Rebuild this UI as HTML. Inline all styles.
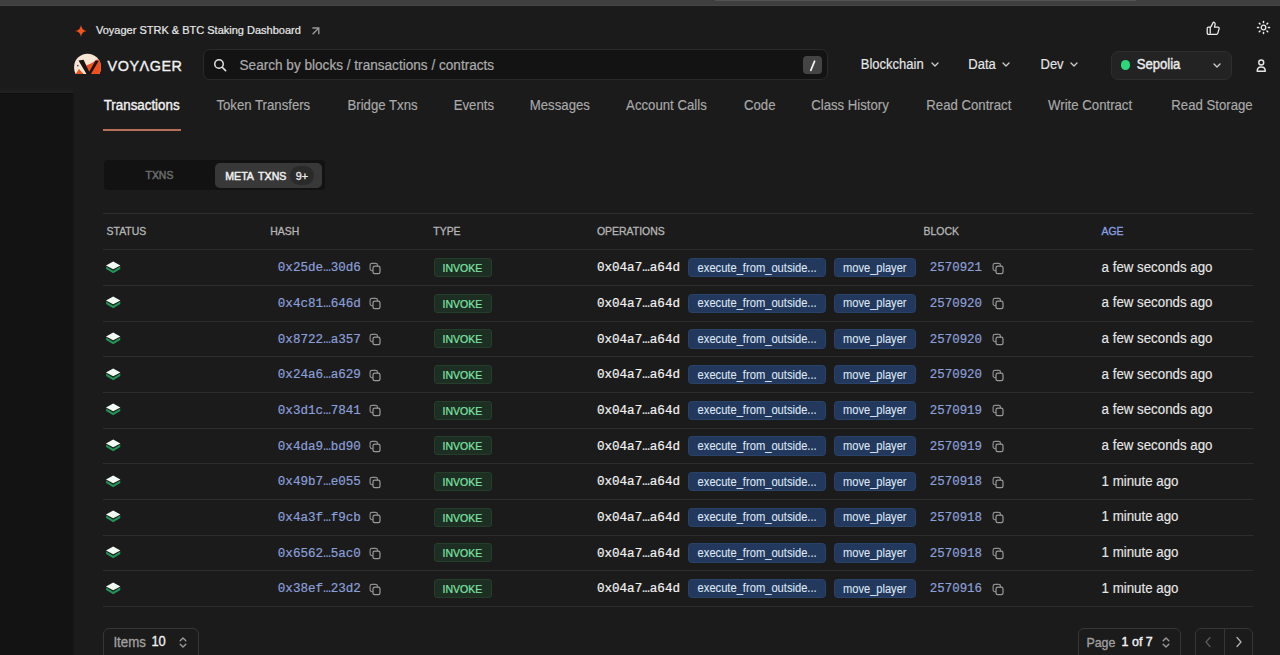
<!DOCTYPE html>
<html><head><meta charset="utf-8">
<style>
html,body{margin:0;padding:0;}
body{width:1280px;height:655px;overflow:hidden;background:#1b1b1b;position:relative;font-family:"Liberation Sans", sans-serif;}
.t{position:absolute;white-space:pre;}
.S{font-family:"Liberation Sans", sans-serif;}
.M{font-family:"Liberation Mono", monospace;}
.a{position:absolute;}
</style></head><body>
<div class="a" style="left:0;top:0;width:1280px;height:6px;background:#3f3f3f;border-bottom:1px solid #454545;box-sizing:border-box"></div>
<div class="a" style="left:715px;top:0;width:421px;height:1px;background:#535353"></div>
<div class="a" style="left:0;top:87.5px;width:73px;height:5px;background:linear-gradient(#1c1c1c,#202020)"></div>
<div class="a" style="left:0;top:92.5px;width:72.5px;height:563px;background:#131313;border-top:1px solid #0f0f0f;box-sizing:border-box"></div>
<div class="a" style="left:72.5px;top:92.5px;width:2.5px;height:563px;background:linear-gradient(90deg,#151515,#1b1b1b)"></div>
<svg class="a" style="left:75px;top:25px" width="12" height="12" viewBox="0 0 12 12"><path d="M6 0 Q6.6 5.4 12 6 Q6.6 6.6 6 12 Q5.4 6.6 0 6 Q5.4 5.4 6 0Z" fill="#f2561d"/></svg>
<div class="t S" style="left:96px;top:25.39px;font-size:11px;line-height:11px;color:#e8e8e8;font-weight:400;-webkit-text-stroke:0.2px #e8e8e8;transform:scaleY(1.07);transform-origin:0 9.31px;">Voyager STRK &amp; BTC Staking Dashboard</div>
<svg class="a" style="left:311px;top:27px" width="9" height="9" viewBox="0 0 9 9"><path d="M1.6 7.2 L7.6 1.2 M1.4 1 H7.8 V7.2" stroke="#9a9a9a" stroke-width="1.35" fill="none"/></svg>
<svg class="a" style="left:74px;top:53px" width="28" height="22" viewBox="0 0 28 22">
<defs><clipPath id="lc"><path d="M0.1 14.1 A13.4 13.4 0 0 1 26.9 14.1 L26.9 15 A13.4 13.4 0 0 1 25.4 21 L1.6 21 A13.4 13.4 0 0 1 0.1 15 Z"/></clipPath></defs>
<g clip-path="url(#lc)">
<rect x="0" y="0" width="28" height="22" fill="#f7e6d4"/>
<path d="M12.3 12.5 L18 10 L22.5 6.8 L28 6 L28 22 L15 22 Z" fill="#f0501e"/>
<path d="M1 22 L5 16 L10.5 22 Z" fill="#f0501e"/>
<path d="M4.5 7.6 L9.6 6.8 L15.2 18.8 L21.6 7.6 L24.6 8 L16.8 21.2 L12.6 21.2 Z" fill="#1a1412"/>
<circle cx="3.8" cy="12.6" r="0.9" fill="#555"/>
</g></svg>
<div class="t S" style="left:107.5px;top:59.21px;font-size:14.4px;line-height:14.4px;color:#f2f2f2;font-weight:400;-webkit-text-stroke:0.35px #f2f2f2;transform:scaleY(1.07);transform-origin:0 12.19px;letter-spacing:0.55px;">VOY&#923;GER</div>
<div class="a" style="left:203px;top:49px;width:625px;height:31px;box-sizing:border-box;background:#131313;border:1px solid #2a2a2a;border-radius:7px"></div>
<svg class="a" style="left:213px;top:58px" width="15" height="15" viewBox="0 0 15 15"><circle cx="6" cy="6" r="4.25" stroke="#e2e2e2" stroke-width="1.5" fill="none"/><path d="M9.2 9.2 L12.6 12.6" stroke="#e2e2e2" stroke-width="1.6" stroke-linecap="round"/></svg>
<div class="t S" style="left:239.5px;top:58.79px;font-size:13.6px;line-height:13.6px;color:#ababab;font-weight:400;-webkit-text-stroke:0.2px #ababab;transform:scaleY(1.07);transform-origin:0 11.51px;">Search by blocks / transactions / contracts</div>
<div class="a" style="left:803px;top:56.2px;width:18.5px;height:18px;background:#444444;border-radius:4px"></div>
<svg class="a" style="left:803px;top:56px" width="19" height="19" viewBox="0 0 19 19"><path d="M11.6 5.2 L7.8 14.3" stroke="#f4f4f4" stroke-width="1.7" stroke-linecap="round"/></svg>
<div class="t S" style="left:860.8px;top:57.50px;font-size:13px;line-height:13px;color:#e6e6e6;font-weight:400;-webkit-text-stroke:0.15px #e6e6e6;transform:scaleY(1.07);transform-origin:0 11.00px;">Blockchain</div>
<svg class="a" style="left:930.5px;top:62px" width="8" height="5" viewBox="0 0 8 5"><path d="M1 1 L4 4 L7 1" stroke="#cfcfcf" stroke-width="1.3" fill="none" stroke-linecap="round" stroke-linejoin="round"/></svg>
<div class="t S" style="left:968.3px;top:57.50px;font-size:13px;line-height:13px;color:#e6e6e6;font-weight:400;-webkit-text-stroke:0.15px #e6e6e6;transform:scaleY(1.07);transform-origin:0 11.00px;">Data</div>
<svg class="a" style="left:1002.3px;top:62px" width="8" height="5" viewBox="0 0 8 5"><path d="M1 1 L4 4 L7 1" stroke="#cfcfcf" stroke-width="1.3" fill="none" stroke-linecap="round" stroke-linejoin="round"/></svg>
<div class="t S" style="left:1040.5px;top:57.50px;font-size:13px;line-height:13px;color:#e6e6e6;font-weight:400;-webkit-text-stroke:0.15px #e6e6e6;transform:scaleY(1.07);transform-origin:0 11.00px;">Dev</div>
<svg class="a" style="left:1069.8px;top:62px" width="8" height="5" viewBox="0 0 8 5"><path d="M1 1 L4 4 L7 1" stroke="#cfcfcf" stroke-width="1.3" fill="none" stroke-linecap="round" stroke-linejoin="round"/></svg>
<div class="a" style="left:1111px;top:51px;width:120.5px;height:28.5px;box-sizing:border-box;background:#232323;border:1px solid #2e2e2e;border-radius:7px"></div>
<div class="a" style="left:1120.8px;top:60px;width:9.5px;height:9.5px;border-radius:50%;background:#2bd87a"></div>
<div class="t S" style="left:1136.7px;top:57.91px;font-size:13.1px;line-height:13.1px;color:#ececec;font-weight:400;-webkit-text-stroke:0.38px #ececec;transform:scaleY(1.07);transform-origin:0 11.09px;">Sepolia</div>
<svg class="a" style="left:1212.5px;top:63px" width="8" height="5" viewBox="0 0 8 5"><path d="M1 1 L4 4 L7 1" stroke="#cfcfcf" stroke-width="1.3" fill="none" stroke-linecap="round" stroke-linejoin="round"/></svg>
<svg class="a" style="left:1255px;top:59px" width="12" height="14" viewBox="0 0 12 14"><circle cx="6.25" cy="3.5" r="2.45" stroke="#e6e6e6" stroke-width="1.45" fill="none"/><path d="M2.2 12.2 C2.2 9.2 3.9 8 6.25 8 C8.6 8 10.3 9.2 10.3 12.2 Z" stroke="#e6e6e6" stroke-width="1.45" fill="none" stroke-linejoin="round"/></svg>
<svg class="a" style="left:1206.3px;top:20.5px" width="14.5" height="14.5" viewBox="0 0 24 24"><path d="M7 10v11" stroke="#ececec" stroke-width="2.1" fill="none"/><path d="M15 5.88 14 10h5.83a2 2 0 0 1 1.92 2.56l-2.33 8A2 2 0 0 1 17.5 22H4a2 2 0 0 1-2-2v-8a2 2 0 0 1 2-2h2.76a2 2 0 0 0 1.79-1.11L12 2a3.13 3.13 0 0 1 3 3.88Z" stroke="#ececec" stroke-width="2.1" fill="none" stroke-linejoin="round"/></svg>
<svg class="a" style="left:1256px;top:20.3px" width="15" height="15" viewBox="0 0 15 15"><circle cx="7.5" cy="7.5" r="2.3" stroke="#ececec" stroke-width="1.3" fill="none"/><path d="M12.40 7.50 L13.50 7.50" stroke="#ececec" stroke-width="1.5" stroke-linecap="round"/><path d="M10.96 10.96 L11.74 11.74" stroke="#ececec" stroke-width="1.5" stroke-linecap="round"/><path d="M7.50 12.40 L7.50 13.50" stroke="#ececec" stroke-width="1.5" stroke-linecap="round"/><path d="M4.04 10.96 L3.26 11.74" stroke="#ececec" stroke-width="1.5" stroke-linecap="round"/><path d="M2.60 7.50 L1.50 7.50" stroke="#ececec" stroke-width="1.5" stroke-linecap="round"/><path d="M4.04 4.04 L3.26 3.26" stroke="#ececec" stroke-width="1.5" stroke-linecap="round"/><path d="M7.50 2.60 L7.50 1.50" stroke="#ececec" stroke-width="1.5" stroke-linecap="round"/><path d="M10.96 4.04 L11.74 3.26" stroke="#ececec" stroke-width="1.5" stroke-linecap="round"/></svg>
<div class="t S" style="left:103.7px;top:99.10px;font-size:13.35px;line-height:13.35px;color:#f2f2f2;font-weight:400;-webkit-text-stroke:0.35px #f2f2f2;transform:scaleY(1.07);transform-origin:0 11.30px;">Transactions</div>
<div class="t S" style="left:216.4px;top:99.23px;font-size:13.2px;line-height:13.2px;color:#a9a9a9;font-weight:400;-webkit-text-stroke:0.15px #a9a9a9;transform:scaleY(1.07);transform-origin:0 11.17px;">Token Transfers</div>
<div class="t S" style="left:347.5px;top:99.23px;font-size:13.2px;line-height:13.2px;color:#a9a9a9;font-weight:400;-webkit-text-stroke:0.15px #a9a9a9;transform:scaleY(1.07);transform-origin:0 11.17px;">Bridge Txns</div>
<div class="t S" style="left:453.7px;top:99.23px;font-size:13.2px;line-height:13.2px;color:#a9a9a9;font-weight:400;-webkit-text-stroke:0.15px #a9a9a9;transform:scaleY(1.07);transform-origin:0 11.17px;">Events</div>
<div class="t S" style="left:529.8px;top:99.23px;font-size:13.2px;line-height:13.2px;color:#a9a9a9;font-weight:400;-webkit-text-stroke:0.15px #a9a9a9;transform:scaleY(1.07);transform-origin:0 11.17px;">Messages</div>
<div class="t S" style="left:626.1px;top:99.23px;font-size:13.2px;line-height:13.2px;color:#a9a9a9;font-weight:400;-webkit-text-stroke:0.15px #a9a9a9;transform:scaleY(1.07);transform-origin:0 11.17px;">Account Calls</div>
<div class="t S" style="left:744px;top:99.23px;font-size:13.2px;line-height:13.2px;color:#a9a9a9;font-weight:400;-webkit-text-stroke:0.15px #a9a9a9;transform:scaleY(1.07);transform-origin:0 11.17px;">Code</div>
<div class="t S" style="left:811.2px;top:99.23px;font-size:13.2px;line-height:13.2px;color:#a9a9a9;font-weight:400;-webkit-text-stroke:0.15px #a9a9a9;transform:scaleY(1.07);transform-origin:0 11.17px;">Class History</div>
<div class="t S" style="left:926.3px;top:99.23px;font-size:13.2px;line-height:13.2px;color:#a9a9a9;font-weight:400;-webkit-text-stroke:0.15px #a9a9a9;transform:scaleY(1.07);transform-origin:0 11.17px;">Read Contract</div>
<div class="t S" style="left:1048.1px;top:99.23px;font-size:13.2px;line-height:13.2px;color:#a9a9a9;font-weight:400;-webkit-text-stroke:0.15px #a9a9a9;transform:scaleY(1.07);transform-origin:0 11.17px;">Write Contract</div>
<div class="t S" style="left:1171.3px;top:99.23px;font-size:13.2px;line-height:13.2px;color:#a9a9a9;font-weight:400;-webkit-text-stroke:0.15px #a9a9a9;transform:scaleY(1.07);transform-origin:0 11.17px;">Read Storage</div>
<div class="a" style="left:103px;top:128.5px;width:77.5px;height:2px;background:#b47157"></div>
<div class="a" style="left:104px;top:160.3px;width:220.7px;height:30px;background:#121212;border-radius:4px"></div>
<div class="a" style="left:214.6px;top:163.1px;width:107.7px;height:24.8px;background:#383838;border-radius:5px"></div>
<div class="t S" style="left:145.6px;top:171.20px;font-size:10.4px;line-height:10.4px;color:#6c6c6c;font-weight:400;-webkit-text-stroke:0.45px #6c6c6c;transform:scaleY(1.07);transform-origin:0 8.80px;">TXNS</div>
<div class="t S" style="left:225.3px;top:171.03px;font-size:10.6px;line-height:10.6px;color:#f0f0f0;font-weight:400;-webkit-text-stroke:0.45px #f0f0f0;transform:scaleY(1.07);transform-origin:0 8.97px;word-spacing:2px;">META TXNS</div>
<div class="a" style="left:290px;top:166px;width:23.5px;height:19px;background:#2a2a2a;border-radius:10px"></div>
<div class="t S" style="left:295.8px;top:170.86px;font-size:10.8px;line-height:10.8px;color:#ececec;font-weight:400;-webkit-text-stroke:0.3px #ececec;transform:scaleY(1.07);transform-origin:0 9.14px;">9+</div>
<div class="a" style="left:103px;top:213px;width:1150px;height:1px;background:#2d2d2d"></div>
<div class="t S" style="left:106.6px;top:226.55px;font-size:10.45px;line-height:10.45px;color:#b5b5b5;font-weight:400;-webkit-text-stroke:0.3px #b5b5b5;transform:scaleY(1.07);transform-origin:0 8.85px;">STATUS</div>
<div class="t S" style="left:270.3px;top:226.55px;font-size:10.45px;line-height:10.45px;color:#b5b5b5;font-weight:400;-webkit-text-stroke:0.3px #b5b5b5;transform:scaleY(1.07);transform-origin:0 8.85px;">HASH</div>
<div class="t S" style="left:433.3px;top:226.55px;font-size:10.45px;line-height:10.45px;color:#b5b5b5;font-weight:400;-webkit-text-stroke:0.3px #b5b5b5;transform:scaleY(1.07);transform-origin:0 8.85px;">TYPE</div>
<div class="t S" style="left:597px;top:226.55px;font-size:10.45px;line-height:10.45px;color:#b5b5b5;font-weight:400;-webkit-text-stroke:0.3px #b5b5b5;transform:scaleY(1.07);transform-origin:0 8.85px;">OPERATIONS</div>
<div class="t S" style="left:923.5px;top:226.55px;font-size:10.45px;line-height:10.45px;color:#b5b5b5;font-weight:400;-webkit-text-stroke:0.3px #b5b5b5;transform:scaleY(1.07);transform-origin:0 8.85px;">BLOCK</div>
<div class="t S" style="left:1101.5px;top:226.55px;font-size:10.45px;line-height:10.45px;color:#8aa0e0;font-weight:400;-webkit-text-stroke:0.3px #8aa0e0;transform:scaleY(1.07);transform-origin:0 8.85px;">AGE</div>
<div class="a" style="left:103px;top:249.40px;width:1150px;height:1px;background:#2d2d2d"></div>
<svg class="a" style="left:105.7px;top:260.7px" width="15" height="13" viewBox="0 0 15 13"><path d="M0.1 5.6 L7.2 9.7 L14.3 5.6 L14.3 8.1 L7.2 12.3 L0.1 8.1 Z" fill="#239356"/><path d="M7.2 0.6 L14.4 4.4 L7.2 8.3 L0 4.4 Z" fill="#f2faf4"/></svg>
<div class="t M" style="left:277.8px;top:262.34px;font-size:12.6px;line-height:12.6px;color:#8b9fd9;font-weight:400;-webkit-text-stroke:0.2px #8b9fd9;transform:scaleY(1.05);transform-origin:0 9.66px;">0x25de…30d6</div>
<svg class="a" style="left:369.4px;top:261.7px" width="12" height="13" viewBox="0 0 12 13"><rect x="1.1" y="1.3" width="7.4" height="7.4" rx="1.9" stroke="#8f8f8f" stroke-width="1.15" fill="none"/><rect x="4" y="4.2" width="7" height="7.4" rx="1.7" stroke="#9a9a9a" stroke-width="1.2" fill="#1b1b1b"/></svg>
<div class="a" style="left:433.5px;top:258.00px;width:58.4px;height:19px;box-sizing:border-box;background:#1d2e22;border:1px solid #253d2b;border-radius:3px"></div>
<div class="t S" style="left:442.5px;top:263.11px;font-size:10.5px;line-height:10.5px;color:#7fe4a8;font-weight:400;-webkit-text-stroke:0.2px #7fe4a8;transform:scaleY(1.07);transform-origin:0 8.89px;">INVOKE</div>
<div class="t M" style="left:596.9px;top:262.34px;font-size:12.6px;line-height:12.6px;color:#f2f2f2;font-weight:400;-webkit-text-stroke:0.2px #f2f2f2;transform:scaleY(1.05);transform-origin:0 9.66px;">0x04a7…a64d</div>
<div class="a" style="left:688.2px;top:257.90px;width:138.3px;height:19.5px;box-sizing:border-box;background:#22385c;border:1px solid #294268;border-radius:3.5px"></div>
<div class="t S" style="left:697.6px;top:262.55px;font-size:11.16px;line-height:11.16px;color:#dfe7f5;font-weight:400;-webkit-text-stroke:0.08px #dfe7f5;transform:scaleY(1.07);transform-origin:0 9.45px;">execute_from_outside...</div>
<div class="a" style="left:833.9px;top:257.90px;width:82.4px;height:19.5px;box-sizing:border-box;background:#22385c;border:1px solid #294268;border-radius:3.5px"></div>
<div class="t S" style="left:843px;top:262.60px;font-size:11.1px;line-height:11.1px;color:#dfe7f5;font-weight:400;-webkit-text-stroke:0.08px #dfe7f5;transform:scaleY(1.07);transform-origin:0 9.40px;">move_player</div>
<div class="t M" style="left:929.8px;top:262.46px;font-size:12.45px;line-height:12.45px;color:#8b9fd9;font-weight:400;-webkit-text-stroke:0.2px #8b9fd9;transform:scaleY(1.05);transform-origin:0 9.54px;">2570921</div>
<svg class="a" style="left:991.5px;top:261.7px" width="12" height="13" viewBox="0 0 12 13"><rect x="1.1" y="1.3" width="7.4" height="7.4" rx="1.9" stroke="#8f8f8f" stroke-width="1.15" fill="none"/><rect x="4" y="4.2" width="7" height="7.4" rx="1.7" stroke="#9a9a9a" stroke-width="1.2" fill="#1b1b1b"/></svg>
<div class="t S" style="left:1101.6px;top:260.74px;font-size:13.3px;line-height:13.3px;color:#e8e8e8;font-weight:400;-webkit-text-stroke:0.12px #e8e8e8;transform:scaleY(1.07);transform-origin:0 11.26px;">a few seconds ago</div>
<div class="a" style="left:103px;top:285.06px;width:1150px;height:1px;background:#2d2d2d"></div>
<svg class="a" style="left:105.7px;top:296.36px" width="15" height="13" viewBox="0 0 15 13"><path d="M0.1 5.6 L7.2 9.7 L14.3 5.6 L14.3 8.1 L7.2 12.3 L0.1 8.1 Z" fill="#239356"/><path d="M7.2 0.6 L14.4 4.4 L7.2 8.3 L0 4.4 Z" fill="#f2faf4"/></svg>
<div class="t M" style="left:277.8px;top:298.00px;font-size:12.6px;line-height:12.6px;color:#8b9fd9;font-weight:400;-webkit-text-stroke:0.2px #8b9fd9;transform:scaleY(1.05);transform-origin:0 9.66px;">0x4c81…646d</div>
<svg class="a" style="left:369.4px;top:297.36px" width="12" height="13" viewBox="0 0 12 13"><rect x="1.1" y="1.3" width="7.4" height="7.4" rx="1.9" stroke="#8f8f8f" stroke-width="1.15" fill="none"/><rect x="4" y="4.2" width="7" height="7.4" rx="1.7" stroke="#9a9a9a" stroke-width="1.2" fill="#1b1b1b"/></svg>
<div class="a" style="left:433.5px;top:293.66px;width:58.4px;height:19px;box-sizing:border-box;background:#1d2e22;border:1px solid #253d2b;border-radius:3px"></div>
<div class="t S" style="left:442.5px;top:298.77px;font-size:10.5px;line-height:10.5px;color:#7fe4a8;font-weight:400;-webkit-text-stroke:0.2px #7fe4a8;transform:scaleY(1.07);transform-origin:0 8.89px;">INVOKE</div>
<div class="t M" style="left:596.9px;top:298.00px;font-size:12.6px;line-height:12.6px;color:#f2f2f2;font-weight:400;-webkit-text-stroke:0.2px #f2f2f2;transform:scaleY(1.05);transform-origin:0 9.66px;">0x04a7…a64d</div>
<div class="a" style="left:688.2px;top:293.56px;width:138.3px;height:19.5px;box-sizing:border-box;background:#22385c;border:1px solid #294268;border-radius:3.5px"></div>
<div class="t S" style="left:697.6px;top:298.21px;font-size:11.16px;line-height:11.16px;color:#dfe7f5;font-weight:400;-webkit-text-stroke:0.08px #dfe7f5;transform:scaleY(1.07);transform-origin:0 9.45px;">execute_from_outside...</div>
<div class="a" style="left:833.9px;top:293.56px;width:82.4px;height:19.5px;box-sizing:border-box;background:#22385c;border:1px solid #294268;border-radius:3.5px"></div>
<div class="t S" style="left:843px;top:298.26px;font-size:11.1px;line-height:11.1px;color:#dfe7f5;font-weight:400;-webkit-text-stroke:0.08px #dfe7f5;transform:scaleY(1.07);transform-origin:0 9.40px;">move_player</div>
<div class="t M" style="left:929.8px;top:298.12px;font-size:12.45px;line-height:12.45px;color:#8b9fd9;font-weight:400;-webkit-text-stroke:0.2px #8b9fd9;transform:scaleY(1.05);transform-origin:0 9.54px;">2570920</div>
<svg class="a" style="left:991.5px;top:297.36px" width="12" height="13" viewBox="0 0 12 13"><rect x="1.1" y="1.3" width="7.4" height="7.4" rx="1.9" stroke="#8f8f8f" stroke-width="1.15" fill="none"/><rect x="4" y="4.2" width="7" height="7.4" rx="1.7" stroke="#9a9a9a" stroke-width="1.2" fill="#1b1b1b"/></svg>
<div class="t S" style="left:1101.6px;top:296.40px;font-size:13.3px;line-height:13.3px;color:#e8e8e8;font-weight:400;-webkit-text-stroke:0.12px #e8e8e8;transform:scaleY(1.07);transform-origin:0 11.26px;">a few seconds ago</div>
<div class="a" style="left:103px;top:320.72px;width:1150px;height:1px;background:#2d2d2d"></div>
<svg class="a" style="left:105.7px;top:332.02000000000004px" width="15" height="13" viewBox="0 0 15 13"><path d="M0.1 5.6 L7.2 9.7 L14.3 5.6 L14.3 8.1 L7.2 12.3 L0.1 8.1 Z" fill="#239356"/><path d="M7.2 0.6 L14.4 4.4 L7.2 8.3 L0 4.4 Z" fill="#f2faf4"/></svg>
<div class="t M" style="left:277.8px;top:333.66px;font-size:12.6px;line-height:12.6px;color:#8b9fd9;font-weight:400;-webkit-text-stroke:0.2px #8b9fd9;transform:scaleY(1.05);transform-origin:0 9.66px;">0x8722…a357</div>
<svg class="a" style="left:369.4px;top:333.02000000000004px" width="12" height="13" viewBox="0 0 12 13"><rect x="1.1" y="1.3" width="7.4" height="7.4" rx="1.9" stroke="#8f8f8f" stroke-width="1.15" fill="none"/><rect x="4" y="4.2" width="7" height="7.4" rx="1.7" stroke="#9a9a9a" stroke-width="1.2" fill="#1b1b1b"/></svg>
<div class="a" style="left:433.5px;top:329.32px;width:58.4px;height:19px;box-sizing:border-box;background:#1d2e22;border:1px solid #253d2b;border-radius:3px"></div>
<div class="t S" style="left:442.5px;top:334.43px;font-size:10.5px;line-height:10.5px;color:#7fe4a8;font-weight:400;-webkit-text-stroke:0.2px #7fe4a8;transform:scaleY(1.07);transform-origin:0 8.89px;">INVOKE</div>
<div class="t M" style="left:596.9px;top:333.66px;font-size:12.6px;line-height:12.6px;color:#f2f2f2;font-weight:400;-webkit-text-stroke:0.2px #f2f2f2;transform:scaleY(1.05);transform-origin:0 9.66px;">0x04a7…a64d</div>
<div class="a" style="left:688.2px;top:329.22px;width:138.3px;height:19.5px;box-sizing:border-box;background:#22385c;border:1px solid #294268;border-radius:3.5px"></div>
<div class="t S" style="left:697.6px;top:333.87px;font-size:11.16px;line-height:11.16px;color:#dfe7f5;font-weight:400;-webkit-text-stroke:0.08px #dfe7f5;transform:scaleY(1.07);transform-origin:0 9.45px;">execute_from_outside...</div>
<div class="a" style="left:833.9px;top:329.22px;width:82.4px;height:19.5px;box-sizing:border-box;background:#22385c;border:1px solid #294268;border-radius:3.5px"></div>
<div class="t S" style="left:843px;top:333.92px;font-size:11.1px;line-height:11.1px;color:#dfe7f5;font-weight:400;-webkit-text-stroke:0.08px #dfe7f5;transform:scaleY(1.07);transform-origin:0 9.40px;">move_player</div>
<div class="t M" style="left:929.8px;top:333.78px;font-size:12.45px;line-height:12.45px;color:#8b9fd9;font-weight:400;-webkit-text-stroke:0.2px #8b9fd9;transform:scaleY(1.05);transform-origin:0 9.54px;">2570920</div>
<svg class="a" style="left:991.5px;top:333.02000000000004px" width="12" height="13" viewBox="0 0 12 13"><rect x="1.1" y="1.3" width="7.4" height="7.4" rx="1.9" stroke="#8f8f8f" stroke-width="1.15" fill="none"/><rect x="4" y="4.2" width="7" height="7.4" rx="1.7" stroke="#9a9a9a" stroke-width="1.2" fill="#1b1b1b"/></svg>
<div class="t S" style="left:1101.6px;top:332.06px;font-size:13.3px;line-height:13.3px;color:#e8e8e8;font-weight:400;-webkit-text-stroke:0.12px #e8e8e8;transform:scaleY(1.07);transform-origin:0 11.26px;">a few seconds ago</div>
<div class="a" style="left:103px;top:356.38px;width:1150px;height:1px;background:#2d2d2d"></div>
<svg class="a" style="left:105.7px;top:367.68px" width="15" height="13" viewBox="0 0 15 13"><path d="M0.1 5.6 L7.2 9.7 L14.3 5.6 L14.3 8.1 L7.2 12.3 L0.1 8.1 Z" fill="#239356"/><path d="M7.2 0.6 L14.4 4.4 L7.2 8.3 L0 4.4 Z" fill="#f2faf4"/></svg>
<div class="t M" style="left:277.8px;top:369.32px;font-size:12.6px;line-height:12.6px;color:#8b9fd9;font-weight:400;-webkit-text-stroke:0.2px #8b9fd9;transform:scaleY(1.05);transform-origin:0 9.66px;">0x24a6…a629</div>
<svg class="a" style="left:369.4px;top:368.68px" width="12" height="13" viewBox="0 0 12 13"><rect x="1.1" y="1.3" width="7.4" height="7.4" rx="1.9" stroke="#8f8f8f" stroke-width="1.15" fill="none"/><rect x="4" y="4.2" width="7" height="7.4" rx="1.7" stroke="#9a9a9a" stroke-width="1.2" fill="#1b1b1b"/></svg>
<div class="a" style="left:433.5px;top:364.98px;width:58.4px;height:19px;box-sizing:border-box;background:#1d2e22;border:1px solid #253d2b;border-radius:3px"></div>
<div class="t S" style="left:442.5px;top:370.09px;font-size:10.5px;line-height:10.5px;color:#7fe4a8;font-weight:400;-webkit-text-stroke:0.2px #7fe4a8;transform:scaleY(1.07);transform-origin:0 8.89px;">INVOKE</div>
<div class="t M" style="left:596.9px;top:369.32px;font-size:12.6px;line-height:12.6px;color:#f2f2f2;font-weight:400;-webkit-text-stroke:0.2px #f2f2f2;transform:scaleY(1.05);transform-origin:0 9.66px;">0x04a7…a64d</div>
<div class="a" style="left:688.2px;top:364.88px;width:138.3px;height:19.5px;box-sizing:border-box;background:#22385c;border:1px solid #294268;border-radius:3.5px"></div>
<div class="t S" style="left:697.6px;top:369.53px;font-size:11.16px;line-height:11.16px;color:#dfe7f5;font-weight:400;-webkit-text-stroke:0.08px #dfe7f5;transform:scaleY(1.07);transform-origin:0 9.45px;">execute_from_outside...</div>
<div class="a" style="left:833.9px;top:364.88px;width:82.4px;height:19.5px;box-sizing:border-box;background:#22385c;border:1px solid #294268;border-radius:3.5px"></div>
<div class="t S" style="left:843px;top:369.58px;font-size:11.1px;line-height:11.1px;color:#dfe7f5;font-weight:400;-webkit-text-stroke:0.08px #dfe7f5;transform:scaleY(1.07);transform-origin:0 9.40px;">move_player</div>
<div class="t M" style="left:929.8px;top:369.44px;font-size:12.45px;line-height:12.45px;color:#8b9fd9;font-weight:400;-webkit-text-stroke:0.2px #8b9fd9;transform:scaleY(1.05);transform-origin:0 9.54px;">2570920</div>
<svg class="a" style="left:991.5px;top:368.68px" width="12" height="13" viewBox="0 0 12 13"><rect x="1.1" y="1.3" width="7.4" height="7.4" rx="1.9" stroke="#8f8f8f" stroke-width="1.15" fill="none"/><rect x="4" y="4.2" width="7" height="7.4" rx="1.7" stroke="#9a9a9a" stroke-width="1.2" fill="#1b1b1b"/></svg>
<div class="t S" style="left:1101.6px;top:367.72px;font-size:13.3px;line-height:13.3px;color:#e8e8e8;font-weight:400;-webkit-text-stroke:0.12px #e8e8e8;transform:scaleY(1.07);transform-origin:0 11.26px;">a few seconds ago</div>
<div class="a" style="left:103px;top:392.04px;width:1150px;height:1px;background:#2d2d2d"></div>
<svg class="a" style="left:105.7px;top:403.34px" width="15" height="13" viewBox="0 0 15 13"><path d="M0.1 5.6 L7.2 9.7 L14.3 5.6 L14.3 8.1 L7.2 12.3 L0.1 8.1 Z" fill="#239356"/><path d="M7.2 0.6 L14.4 4.4 L7.2 8.3 L0 4.4 Z" fill="#f2faf4"/></svg>
<div class="t M" style="left:277.8px;top:404.98px;font-size:12.6px;line-height:12.6px;color:#8b9fd9;font-weight:400;-webkit-text-stroke:0.2px #8b9fd9;transform:scaleY(1.05);transform-origin:0 9.66px;">0x3d1c…7841</div>
<svg class="a" style="left:369.4px;top:404.34px" width="12" height="13" viewBox="0 0 12 13"><rect x="1.1" y="1.3" width="7.4" height="7.4" rx="1.9" stroke="#8f8f8f" stroke-width="1.15" fill="none"/><rect x="4" y="4.2" width="7" height="7.4" rx="1.7" stroke="#9a9a9a" stroke-width="1.2" fill="#1b1b1b"/></svg>
<div class="a" style="left:433.5px;top:400.64px;width:58.4px;height:19px;box-sizing:border-box;background:#1d2e22;border:1px solid #253d2b;border-radius:3px"></div>
<div class="t S" style="left:442.5px;top:405.75px;font-size:10.5px;line-height:10.5px;color:#7fe4a8;font-weight:400;-webkit-text-stroke:0.2px #7fe4a8;transform:scaleY(1.07);transform-origin:0 8.89px;">INVOKE</div>
<div class="t M" style="left:596.9px;top:404.98px;font-size:12.6px;line-height:12.6px;color:#f2f2f2;font-weight:400;-webkit-text-stroke:0.2px #f2f2f2;transform:scaleY(1.05);transform-origin:0 9.66px;">0x04a7…a64d</div>
<div class="a" style="left:688.2px;top:400.54px;width:138.3px;height:19.5px;box-sizing:border-box;background:#22385c;border:1px solid #294268;border-radius:3.5px"></div>
<div class="t S" style="left:697.6px;top:405.19px;font-size:11.16px;line-height:11.16px;color:#dfe7f5;font-weight:400;-webkit-text-stroke:0.08px #dfe7f5;transform:scaleY(1.07);transform-origin:0 9.45px;">execute_from_outside...</div>
<div class="a" style="left:833.9px;top:400.54px;width:82.4px;height:19.5px;box-sizing:border-box;background:#22385c;border:1px solid #294268;border-radius:3.5px"></div>
<div class="t S" style="left:843px;top:405.24px;font-size:11.1px;line-height:11.1px;color:#dfe7f5;font-weight:400;-webkit-text-stroke:0.08px #dfe7f5;transform:scaleY(1.07);transform-origin:0 9.40px;">move_player</div>
<div class="t M" style="left:929.8px;top:405.10px;font-size:12.45px;line-height:12.45px;color:#8b9fd9;font-weight:400;-webkit-text-stroke:0.2px #8b9fd9;transform:scaleY(1.05);transform-origin:0 9.54px;">2570919</div>
<svg class="a" style="left:991.5px;top:404.34px" width="12" height="13" viewBox="0 0 12 13"><rect x="1.1" y="1.3" width="7.4" height="7.4" rx="1.9" stroke="#8f8f8f" stroke-width="1.15" fill="none"/><rect x="4" y="4.2" width="7" height="7.4" rx="1.7" stroke="#9a9a9a" stroke-width="1.2" fill="#1b1b1b"/></svg>
<div class="t S" style="left:1101.6px;top:403.38px;font-size:13.3px;line-height:13.3px;color:#e8e8e8;font-weight:400;-webkit-text-stroke:0.12px #e8e8e8;transform:scaleY(1.07);transform-origin:0 11.26px;">a few seconds ago</div>
<div class="a" style="left:103px;top:427.70px;width:1150px;height:1px;background:#2d2d2d"></div>
<svg class="a" style="left:105.7px;top:439.0px" width="15" height="13" viewBox="0 0 15 13"><path d="M0.1 5.6 L7.2 9.7 L14.3 5.6 L14.3 8.1 L7.2 12.3 L0.1 8.1 Z" fill="#239356"/><path d="M7.2 0.6 L14.4 4.4 L7.2 8.3 L0 4.4 Z" fill="#f2faf4"/></svg>
<div class="t M" style="left:277.8px;top:440.64px;font-size:12.6px;line-height:12.6px;color:#8b9fd9;font-weight:400;-webkit-text-stroke:0.2px #8b9fd9;transform:scaleY(1.05);transform-origin:0 9.66px;">0x4da9…bd90</div>
<svg class="a" style="left:369.4px;top:440.0px" width="12" height="13" viewBox="0 0 12 13"><rect x="1.1" y="1.3" width="7.4" height="7.4" rx="1.9" stroke="#8f8f8f" stroke-width="1.15" fill="none"/><rect x="4" y="4.2" width="7" height="7.4" rx="1.7" stroke="#9a9a9a" stroke-width="1.2" fill="#1b1b1b"/></svg>
<div class="a" style="left:433.5px;top:436.30px;width:58.4px;height:19px;box-sizing:border-box;background:#1d2e22;border:1px solid #253d2b;border-radius:3px"></div>
<div class="t S" style="left:442.5px;top:441.41px;font-size:10.5px;line-height:10.5px;color:#7fe4a8;font-weight:400;-webkit-text-stroke:0.2px #7fe4a8;transform:scaleY(1.07);transform-origin:0 8.89px;">INVOKE</div>
<div class="t M" style="left:596.9px;top:440.64px;font-size:12.6px;line-height:12.6px;color:#f2f2f2;font-weight:400;-webkit-text-stroke:0.2px #f2f2f2;transform:scaleY(1.05);transform-origin:0 9.66px;">0x04a7…a64d</div>
<div class="a" style="left:688.2px;top:436.20px;width:138.3px;height:19.5px;box-sizing:border-box;background:#22385c;border:1px solid #294268;border-radius:3.5px"></div>
<div class="t S" style="left:697.6px;top:440.85px;font-size:11.16px;line-height:11.16px;color:#dfe7f5;font-weight:400;-webkit-text-stroke:0.08px #dfe7f5;transform:scaleY(1.07);transform-origin:0 9.45px;">execute_from_outside...</div>
<div class="a" style="left:833.9px;top:436.20px;width:82.4px;height:19.5px;box-sizing:border-box;background:#22385c;border:1px solid #294268;border-radius:3.5px"></div>
<div class="t S" style="left:843px;top:440.90px;font-size:11.1px;line-height:11.1px;color:#dfe7f5;font-weight:400;-webkit-text-stroke:0.08px #dfe7f5;transform:scaleY(1.07);transform-origin:0 9.40px;">move_player</div>
<div class="t M" style="left:929.8px;top:440.76px;font-size:12.45px;line-height:12.45px;color:#8b9fd9;font-weight:400;-webkit-text-stroke:0.2px #8b9fd9;transform:scaleY(1.05);transform-origin:0 9.54px;">2570919</div>
<svg class="a" style="left:991.5px;top:440.0px" width="12" height="13" viewBox="0 0 12 13"><rect x="1.1" y="1.3" width="7.4" height="7.4" rx="1.9" stroke="#8f8f8f" stroke-width="1.15" fill="none"/><rect x="4" y="4.2" width="7" height="7.4" rx="1.7" stroke="#9a9a9a" stroke-width="1.2" fill="#1b1b1b"/></svg>
<div class="t S" style="left:1101.6px;top:439.04px;font-size:13.3px;line-height:13.3px;color:#e8e8e8;font-weight:400;-webkit-text-stroke:0.12px #e8e8e8;transform:scaleY(1.07);transform-origin:0 11.26px;">a few seconds ago</div>
<div class="a" style="left:103px;top:463.36px;width:1150px;height:1px;background:#2d2d2d"></div>
<svg class="a" style="left:105.7px;top:474.66px" width="15" height="13" viewBox="0 0 15 13"><path d="M0.1 5.6 L7.2 9.7 L14.3 5.6 L14.3 8.1 L7.2 12.3 L0.1 8.1 Z" fill="#239356"/><path d="M7.2 0.6 L14.4 4.4 L7.2 8.3 L0 4.4 Z" fill="#f2faf4"/></svg>
<div class="t M" style="left:277.8px;top:476.30px;font-size:12.6px;line-height:12.6px;color:#8b9fd9;font-weight:400;-webkit-text-stroke:0.2px #8b9fd9;transform:scaleY(1.05);transform-origin:0 9.66px;">0x49b7…e055</div>
<svg class="a" style="left:369.4px;top:475.66px" width="12" height="13" viewBox="0 0 12 13"><rect x="1.1" y="1.3" width="7.4" height="7.4" rx="1.9" stroke="#8f8f8f" stroke-width="1.15" fill="none"/><rect x="4" y="4.2" width="7" height="7.4" rx="1.7" stroke="#9a9a9a" stroke-width="1.2" fill="#1b1b1b"/></svg>
<div class="a" style="left:433.5px;top:471.96px;width:58.4px;height:19px;box-sizing:border-box;background:#1d2e22;border:1px solid #253d2b;border-radius:3px"></div>
<div class="t S" style="left:442.5px;top:477.07px;font-size:10.5px;line-height:10.5px;color:#7fe4a8;font-weight:400;-webkit-text-stroke:0.2px #7fe4a8;transform:scaleY(1.07);transform-origin:0 8.89px;">INVOKE</div>
<div class="t M" style="left:596.9px;top:476.30px;font-size:12.6px;line-height:12.6px;color:#f2f2f2;font-weight:400;-webkit-text-stroke:0.2px #f2f2f2;transform:scaleY(1.05);transform-origin:0 9.66px;">0x04a7…a64d</div>
<div class="a" style="left:688.2px;top:471.86px;width:138.3px;height:19.5px;box-sizing:border-box;background:#22385c;border:1px solid #294268;border-radius:3.5px"></div>
<div class="t S" style="left:697.6px;top:476.51px;font-size:11.16px;line-height:11.16px;color:#dfe7f5;font-weight:400;-webkit-text-stroke:0.08px #dfe7f5;transform:scaleY(1.07);transform-origin:0 9.45px;">execute_from_outside...</div>
<div class="a" style="left:833.9px;top:471.86px;width:82.4px;height:19.5px;box-sizing:border-box;background:#22385c;border:1px solid #294268;border-radius:3.5px"></div>
<div class="t S" style="left:843px;top:476.56px;font-size:11.1px;line-height:11.1px;color:#dfe7f5;font-weight:400;-webkit-text-stroke:0.08px #dfe7f5;transform:scaleY(1.07);transform-origin:0 9.40px;">move_player</div>
<div class="t M" style="left:929.8px;top:476.42px;font-size:12.45px;line-height:12.45px;color:#8b9fd9;font-weight:400;-webkit-text-stroke:0.2px #8b9fd9;transform:scaleY(1.05);transform-origin:0 9.54px;">2570918</div>
<svg class="a" style="left:991.5px;top:475.66px" width="12" height="13" viewBox="0 0 12 13"><rect x="1.1" y="1.3" width="7.4" height="7.4" rx="1.9" stroke="#8f8f8f" stroke-width="1.15" fill="none"/><rect x="4" y="4.2" width="7" height="7.4" rx="1.7" stroke="#9a9a9a" stroke-width="1.2" fill="#1b1b1b"/></svg>
<div class="t S" style="left:1101.6px;top:474.70px;font-size:13.3px;line-height:13.3px;color:#e8e8e8;font-weight:400;-webkit-text-stroke:0.12px #e8e8e8;transform:scaleY(1.07);transform-origin:0 11.26px;">1 minute ago</div>
<div class="a" style="left:103px;top:499.02px;width:1150px;height:1px;background:#2d2d2d"></div>
<svg class="a" style="left:105.7px;top:510.31999999999994px" width="15" height="13" viewBox="0 0 15 13"><path d="M0.1 5.6 L7.2 9.7 L14.3 5.6 L14.3 8.1 L7.2 12.3 L0.1 8.1 Z" fill="#239356"/><path d="M7.2 0.6 L14.4 4.4 L7.2 8.3 L0 4.4 Z" fill="#f2faf4"/></svg>
<div class="t M" style="left:277.8px;top:511.96px;font-size:12.6px;line-height:12.6px;color:#8b9fd9;font-weight:400;-webkit-text-stroke:0.2px #8b9fd9;transform:scaleY(1.05);transform-origin:0 9.66px;">0x4a3f…f9cb</div>
<svg class="a" style="left:369.4px;top:511.31999999999994px" width="12" height="13" viewBox="0 0 12 13"><rect x="1.1" y="1.3" width="7.4" height="7.4" rx="1.9" stroke="#8f8f8f" stroke-width="1.15" fill="none"/><rect x="4" y="4.2" width="7" height="7.4" rx="1.7" stroke="#9a9a9a" stroke-width="1.2" fill="#1b1b1b"/></svg>
<div class="a" style="left:433.5px;top:507.62px;width:58.4px;height:19px;box-sizing:border-box;background:#1d2e22;border:1px solid #253d2b;border-radius:3px"></div>
<div class="t S" style="left:442.5px;top:512.73px;font-size:10.5px;line-height:10.5px;color:#7fe4a8;font-weight:400;-webkit-text-stroke:0.2px #7fe4a8;transform:scaleY(1.07);transform-origin:0 8.89px;">INVOKE</div>
<div class="t M" style="left:596.9px;top:511.96px;font-size:12.6px;line-height:12.6px;color:#f2f2f2;font-weight:400;-webkit-text-stroke:0.2px #f2f2f2;transform:scaleY(1.05);transform-origin:0 9.66px;">0x04a7…a64d</div>
<div class="a" style="left:688.2px;top:507.52px;width:138.3px;height:19.5px;box-sizing:border-box;background:#22385c;border:1px solid #294268;border-radius:3.5px"></div>
<div class="t S" style="left:697.6px;top:512.17px;font-size:11.16px;line-height:11.16px;color:#dfe7f5;font-weight:400;-webkit-text-stroke:0.08px #dfe7f5;transform:scaleY(1.07);transform-origin:0 9.45px;">execute_from_outside...</div>
<div class="a" style="left:833.9px;top:507.52px;width:82.4px;height:19.5px;box-sizing:border-box;background:#22385c;border:1px solid #294268;border-radius:3.5px"></div>
<div class="t S" style="left:843px;top:512.22px;font-size:11.1px;line-height:11.1px;color:#dfe7f5;font-weight:400;-webkit-text-stroke:0.08px #dfe7f5;transform:scaleY(1.07);transform-origin:0 9.40px;">move_player</div>
<div class="t M" style="left:929.8px;top:512.08px;font-size:12.45px;line-height:12.45px;color:#8b9fd9;font-weight:400;-webkit-text-stroke:0.2px #8b9fd9;transform:scaleY(1.05);transform-origin:0 9.54px;">2570918</div>
<svg class="a" style="left:991.5px;top:511.31999999999994px" width="12" height="13" viewBox="0 0 12 13"><rect x="1.1" y="1.3" width="7.4" height="7.4" rx="1.9" stroke="#8f8f8f" stroke-width="1.15" fill="none"/><rect x="4" y="4.2" width="7" height="7.4" rx="1.7" stroke="#9a9a9a" stroke-width="1.2" fill="#1b1b1b"/></svg>
<div class="t S" style="left:1101.6px;top:510.36px;font-size:13.3px;line-height:13.3px;color:#e8e8e8;font-weight:400;-webkit-text-stroke:0.12px #e8e8e8;transform:scaleY(1.07);transform-origin:0 11.26px;">1 minute ago</div>
<div class="a" style="left:103px;top:534.68px;width:1150px;height:1px;background:#2d2d2d"></div>
<svg class="a" style="left:105.7px;top:545.9799999999999px" width="15" height="13" viewBox="0 0 15 13"><path d="M0.1 5.6 L7.2 9.7 L14.3 5.6 L14.3 8.1 L7.2 12.3 L0.1 8.1 Z" fill="#239356"/><path d="M7.2 0.6 L14.4 4.4 L7.2 8.3 L0 4.4 Z" fill="#f2faf4"/></svg>
<div class="t M" style="left:277.8px;top:547.62px;font-size:12.6px;line-height:12.6px;color:#8b9fd9;font-weight:400;-webkit-text-stroke:0.2px #8b9fd9;transform:scaleY(1.05);transform-origin:0 9.66px;">0x6562…5ac0</div>
<svg class="a" style="left:369.4px;top:546.9799999999999px" width="12" height="13" viewBox="0 0 12 13"><rect x="1.1" y="1.3" width="7.4" height="7.4" rx="1.9" stroke="#8f8f8f" stroke-width="1.15" fill="none"/><rect x="4" y="4.2" width="7" height="7.4" rx="1.7" stroke="#9a9a9a" stroke-width="1.2" fill="#1b1b1b"/></svg>
<div class="a" style="left:433.5px;top:543.28px;width:58.4px;height:19px;box-sizing:border-box;background:#1d2e22;border:1px solid #253d2b;border-radius:3px"></div>
<div class="t S" style="left:442.5px;top:548.39px;font-size:10.5px;line-height:10.5px;color:#7fe4a8;font-weight:400;-webkit-text-stroke:0.2px #7fe4a8;transform:scaleY(1.07);transform-origin:0 8.89px;">INVOKE</div>
<div class="t M" style="left:596.9px;top:547.62px;font-size:12.6px;line-height:12.6px;color:#f2f2f2;font-weight:400;-webkit-text-stroke:0.2px #f2f2f2;transform:scaleY(1.05);transform-origin:0 9.66px;">0x04a7…a64d</div>
<div class="a" style="left:688.2px;top:543.18px;width:138.3px;height:19.5px;box-sizing:border-box;background:#22385c;border:1px solid #294268;border-radius:3.5px"></div>
<div class="t S" style="left:697.6px;top:547.83px;font-size:11.16px;line-height:11.16px;color:#dfe7f5;font-weight:400;-webkit-text-stroke:0.08px #dfe7f5;transform:scaleY(1.07);transform-origin:0 9.45px;">execute_from_outside...</div>
<div class="a" style="left:833.9px;top:543.18px;width:82.4px;height:19.5px;box-sizing:border-box;background:#22385c;border:1px solid #294268;border-radius:3.5px"></div>
<div class="t S" style="left:843px;top:547.88px;font-size:11.1px;line-height:11.1px;color:#dfe7f5;font-weight:400;-webkit-text-stroke:0.08px #dfe7f5;transform:scaleY(1.07);transform-origin:0 9.40px;">move_player</div>
<div class="t M" style="left:929.8px;top:547.74px;font-size:12.45px;line-height:12.45px;color:#8b9fd9;font-weight:400;-webkit-text-stroke:0.2px #8b9fd9;transform:scaleY(1.05);transform-origin:0 9.54px;">2570918</div>
<svg class="a" style="left:991.5px;top:546.9799999999999px" width="12" height="13" viewBox="0 0 12 13"><rect x="1.1" y="1.3" width="7.4" height="7.4" rx="1.9" stroke="#8f8f8f" stroke-width="1.15" fill="none"/><rect x="4" y="4.2" width="7" height="7.4" rx="1.7" stroke="#9a9a9a" stroke-width="1.2" fill="#1b1b1b"/></svg>
<div class="t S" style="left:1101.6px;top:546.02px;font-size:13.3px;line-height:13.3px;color:#e8e8e8;font-weight:400;-webkit-text-stroke:0.12px #e8e8e8;transform:scaleY(1.07);transform-origin:0 11.26px;">1 minute ago</div>
<div class="a" style="left:103px;top:570.34px;width:1150px;height:1px;background:#2d2d2d"></div>
<svg class="a" style="left:105.7px;top:581.6399999999999px" width="15" height="13" viewBox="0 0 15 13"><path d="M0.1 5.6 L7.2 9.7 L14.3 5.6 L14.3 8.1 L7.2 12.3 L0.1 8.1 Z" fill="#239356"/><path d="M7.2 0.6 L14.4 4.4 L7.2 8.3 L0 4.4 Z" fill="#f2faf4"/></svg>
<div class="t M" style="left:277.8px;top:583.28px;font-size:12.6px;line-height:12.6px;color:#8b9fd9;font-weight:400;-webkit-text-stroke:0.2px #8b9fd9;transform:scaleY(1.05);transform-origin:0 9.66px;">0x38ef…23d2</div>
<svg class="a" style="left:369.4px;top:582.6399999999999px" width="12" height="13" viewBox="0 0 12 13"><rect x="1.1" y="1.3" width="7.4" height="7.4" rx="1.9" stroke="#8f8f8f" stroke-width="1.15" fill="none"/><rect x="4" y="4.2" width="7" height="7.4" rx="1.7" stroke="#9a9a9a" stroke-width="1.2" fill="#1b1b1b"/></svg>
<div class="a" style="left:433.5px;top:578.94px;width:58.4px;height:19px;box-sizing:border-box;background:#1d2e22;border:1px solid #253d2b;border-radius:3px"></div>
<div class="t S" style="left:442.5px;top:584.05px;font-size:10.5px;line-height:10.5px;color:#7fe4a8;font-weight:400;-webkit-text-stroke:0.2px #7fe4a8;transform:scaleY(1.07);transform-origin:0 8.89px;">INVOKE</div>
<div class="t M" style="left:596.9px;top:583.28px;font-size:12.6px;line-height:12.6px;color:#f2f2f2;font-weight:400;-webkit-text-stroke:0.2px #f2f2f2;transform:scaleY(1.05);transform-origin:0 9.66px;">0x04a7…a64d</div>
<div class="a" style="left:688.2px;top:578.84px;width:138.3px;height:19.5px;box-sizing:border-box;background:#22385c;border:1px solid #294268;border-radius:3.5px"></div>
<div class="t S" style="left:697.6px;top:583.49px;font-size:11.16px;line-height:11.16px;color:#dfe7f5;font-weight:400;-webkit-text-stroke:0.08px #dfe7f5;transform:scaleY(1.07);transform-origin:0 9.45px;">execute_from_outside...</div>
<div class="a" style="left:833.9px;top:578.84px;width:82.4px;height:19.5px;box-sizing:border-box;background:#22385c;border:1px solid #294268;border-radius:3.5px"></div>
<div class="t S" style="left:843px;top:583.54px;font-size:11.1px;line-height:11.1px;color:#dfe7f5;font-weight:400;-webkit-text-stroke:0.08px #dfe7f5;transform:scaleY(1.07);transform-origin:0 9.40px;">move_player</div>
<div class="t M" style="left:929.8px;top:583.40px;font-size:12.45px;line-height:12.45px;color:#8b9fd9;font-weight:400;-webkit-text-stroke:0.2px #8b9fd9;transform:scaleY(1.05);transform-origin:0 9.54px;">2570916</div>
<svg class="a" style="left:991.5px;top:582.6399999999999px" width="12" height="13" viewBox="0 0 12 13"><rect x="1.1" y="1.3" width="7.4" height="7.4" rx="1.9" stroke="#8f8f8f" stroke-width="1.15" fill="none"/><rect x="4" y="4.2" width="7" height="7.4" rx="1.7" stroke="#9a9a9a" stroke-width="1.2" fill="#1b1b1b"/></svg>
<div class="t S" style="left:1101.6px;top:581.68px;font-size:13.3px;line-height:13.3px;color:#e8e8e8;font-weight:400;-webkit-text-stroke:0.12px #e8e8e8;transform:scaleY(1.07);transform-origin:0 11.26px;">1 minute ago</div>
<div class="a" style="left:103px;top:606.00px;width:1150px;height:1px;background:#2d2d2d"></div>
<div class="a" style="left:103.4px;top:628px;width:95.6px;height:40px;box-sizing:border-box;border:1px solid #363636;border-radius:6px"></div>
<div class="t S" style="left:113.4px;top:635.74px;font-size:13.3px;line-height:13.3px;color:#a0a0a0;font-weight:400;-webkit-text-stroke:0.3px #a0a0a0;transform:scaleY(1.07);transform-origin:0 11.26px;">Items</div>
<div class="t S" style="left:151.4px;top:636.08px;font-size:12.9px;line-height:12.9px;color:#f2f2f2;font-weight:400;-webkit-text-stroke:0.3px #f2f2f2;transform:scaleY(1.07);transform-origin:0 10.92px;">10</div>
<svg class="a" style="left:178.5px;top:637px" width="8" height="11" viewBox="0 0 8 11"><path d="M1.2 3.8 L4 1 L6.8 3.8 M1.2 7.2 L4 10 L6.8 7.2" stroke="#9a9a9a" stroke-width="1.4" fill="none" stroke-linecap="round" stroke-linejoin="round"/></svg>
<div class="a" style="left:1078px;top:628px;width:103px;height:40px;box-sizing:border-box;border:1px solid #363636;border-radius:6px"></div>
<div class="t S" style="left:1086.4px;top:636.50px;font-size:12.4px;line-height:12.4px;color:#a0a0a0;font-weight:400;-webkit-text-stroke:0.3px #a0a0a0;transform:scaleY(1.07);transform-origin:0 10.50px;">Page</div>
<div class="t S" style="left:1121.6px;top:636.46px;font-size:12.45px;line-height:12.45px;color:#f2f2f2;font-weight:400;-webkit-text-stroke:0.4px #f2f2f2;transform:scaleY(1.07);transform-origin:0 10.54px;">1 of 7</div>
<svg class="a" style="left:1162px;top:637px" width="8" height="11" viewBox="0 0 8 11"><path d="M1.2 3.8 L4 1 L6.8 3.8 M1.2 7.2 L4 10 L6.8 7.2" stroke="#9a9a9a" stroke-width="1.4" fill="none" stroke-linecap="round" stroke-linejoin="round"/></svg>
<div class="a" style="left:1195.3px;top:628px;width:57.5px;height:40px;box-sizing:border-box;border:1px solid #363636;border-radius:6px"></div>
<div class="a" style="left:1224px;top:629px;width:1px;height:30px;background:#363636"></div>
<svg class="a" style="left:1204px;top:636px" width="8" height="12" viewBox="0 0 8 12"><path d="M6 1.5 L2 6 L6 10.5" stroke="#5c5c5c" stroke-width="1.3" fill="none" stroke-linecap="round" stroke-linejoin="round"/></svg>
<svg class="a" style="left:1235px;top:636px" width="8" height="12" viewBox="0 0 8 12"><path d="M2 1.5 L6 6 L2 10.5" stroke="#b0b0b0" stroke-width="1.3" fill="none" stroke-linecap="round" stroke-linejoin="round"/></svg>
</body></html>
